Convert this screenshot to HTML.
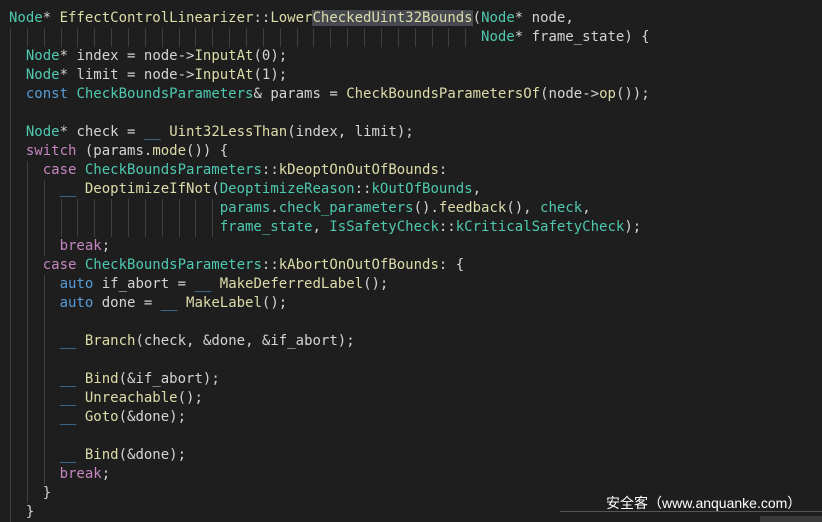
<!DOCTYPE html>
<html><head><meta charset="utf-8">
<style>
html,body{margin:0;padding:0;background:#1e1e1e;width:822px;height:522px;overflow:hidden;position:relative}
#code{position:absolute;left:9px;top:9px;font-family:"DejaVu Sans Mono","Liberation Mono",monospace;font-size:14px;line-height:19px;color:#d4d4d4}
.l{height:19px;white-space:pre}
.t{color:#4ec9b0}.f{color:#dcdcaa}.v{color:#d4d4d4}.k{color:#c586c0}.b{color:#569cd6}.n{color:#d4d4d4}
.hl{background:#464a50}
.g{position:absolute;width:1px;background:#404040}
#wm{position:absolute;left:606px;top:493px;font-family:"Liberation Sans","Noto Sans CJK SC",sans-serif;font-size:14px;color:#fff}
#hr{position:absolute;left:560px;top:511px;width:262px;height:1px;background:#555}
#bx{position:absolute;left:760px;top:516px;width:62px;height:6px;background:#3a3a3a}
</style></head><body>
<div id="code">
<div class="l"><span class="t">Node</span>* <span class="f">EffectControlLinearizer</span>::<span class="f">Lower<span class="hl">CheckedUint32Bounds</span></span>(<span class="t">Node</span>* <span class="v">node</span>,</div>
<div class="l">                                                        <span class="t">Node</span>* <span class="v">frame_state</span>) {</div>
<div class="l">  <span class="t">Node</span>* <span class="v">index</span> = <span class="v">node</span>-&gt;<span class="f">InputAt</span>(<span class="n">0</span>);</div>
<div class="l">  <span class="t">Node</span>* <span class="v">limit</span> = <span class="v">node</span>-&gt;<span class="f">InputAt</span>(<span class="n">1</span>);</div>
<div class="l">  <span class="b">const</span> <span class="t">CheckBoundsParameters</span>&amp; <span class="v">params</span> = <span class="f">CheckBoundsParametersOf</span>(<span class="v">node</span>-&gt;<span class="f">op</span>());</div>
<div class="l"> </div>
<div class="l">  <span class="t">Node</span>* <span class="v">check</span> = <span class="b">__</span> <span class="f">Uint32LessThan</span>(<span class="v">index</span>, <span class="v">limit</span>);</div>
<div class="l">  <span class="k">switch</span> (<span class="v">params</span>.<span class="f">mode</span>()) {</div>
<div class="l">    <span class="k">case</span> <span class="t">CheckBoundsParameters</span>::<span class="f">kDeoptOnOutOfBounds</span>:</div>
<div class="l">      <span class="b">__</span> <span class="f">DeoptimizeIfNot</span>(<span class="t">DeoptimizeReason</span>::<span class="t">kOutOfBounds</span>,</div>
<div class="l">                         <span class="t">params</span>.<span class="t">check_parameters</span>().<span class="f">feedback</span>(), <span class="t">check</span>,</div>
<div class="l">                         <span class="t">frame_state</span>, <span class="t">IsSafetyCheck</span>::<span class="t">kCriticalSafetyCheck</span>);</div>
<div class="l">      <span class="k">break</span>;</div>
<div class="l">    <span class="k">case</span> <span class="t">CheckBoundsParameters</span>::<span class="f">kAbortOnOutOfBounds</span>: {</div>
<div class="l">      <span class="b">auto</span> <span class="v">if_abort</span> = <span class="b">__</span> <span class="f">MakeDeferredLabel</span>();</div>
<div class="l">      <span class="b">auto</span> <span class="v">done</span> = <span class="b">__</span> <span class="f">MakeLabel</span>();</div>
<div class="l"> </div>
<div class="l">      <span class="b">__</span> <span class="f">Branch</span>(<span class="v">check</span>, &amp;<span class="v">done</span>, &amp;<span class="v">if_abort</span>);</div>
<div class="l"> </div>
<div class="l">      <span class="b">__</span> <span class="f">Bind</span>(&amp;<span class="v">if_abort</span>);</div>
<div class="l">      <span class="b">__</span> <span class="f">Unreachable</span>();</div>
<div class="l">      <span class="b">__</span> <span class="f">Goto</span>(&amp;<span class="v">done</span>);</div>
<div class="l"> </div>
<div class="l">      <span class="b">__</span> <span class="f">Bind</span>(&amp;<span class="v">done</span>);</div>
<div class="l">      <span class="k">break</span>;</div>
<div class="l">    }</div>
<div class="l">  }</div>
</div>
<div id="hr"></div><div id="bx"></div>
<div id="wm">安全客（www.anquanke.com）</div>
<script>
var ind=[0,56,2,2,2,2,2,2,4,6,25,25,6,4,6,6,6,6,6,6,6,6,6,6,6,4,2];
var cw=8.43;
for(var i=0;i<ind.length;i++){
  for(var c=0;c<ind[i];c+=2){
    var d=document.createElement('div');d.className='g';
    d.style.left=(10+c*cw)+'px';d.style.top=(9+i*19)+'px';d.style.height='19px';
    document.body.appendChild(d);
  }
}
</script>
</body></html>
